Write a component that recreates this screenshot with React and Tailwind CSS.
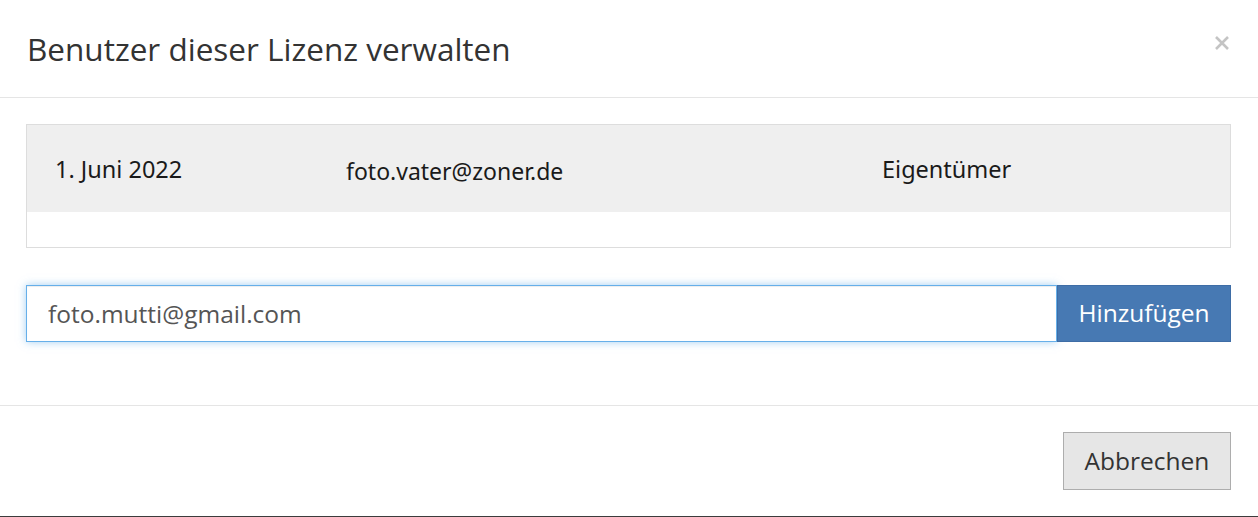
import React from "react";

const rows = [
  { date: "1. Juni 2022", email: "foto.vater@zoner.de", role: "Eigentümer" },
];

const App = () => {
  return (
    <div className="w-[1258px] h-[517px] bg-white border-b border-[#3c3c3c] flex flex-col font-['Open_Sans',sans-serif]">
      <div className="h-[98px] shrink-0 border-b border-[#e5e5e5] flex items-center justify-between pl-[27px] pr-[28px]">
        <h1 className="text-[31.5px] text-[#333] pt-[1px]">Benutzer dieser Lizenz verwalten</h1>
        <button className="text-[#c4c4c4] mb-[11px]">
          <svg width="16" height="16" viewBox="0 0 16 16">
            <path d="M2 2L14 14M14 2L2 14" stroke="currentColor" strokeWidth="2.6" />
          </svg>
        </button>
      </div>

      <div className="px-[26px] pr-[27px] pt-[26px]">
        <div className="border border-[#dddddd]">
          {rows.map((r) => (
            <div
              key={r.email}
              className="h-[87px] bg-[#efefef] grid grid-cols-[319px_536px_1fr] items-center text-[#1a1a1a] font-['Noto_Sans',sans-serif]"
            >
              <span className="pl-[28px] text-[23.5px] pt-[3px]">{r.date}</span>
              <span className="text-[23px] pt-[6px]">{r.email}</span>
              <span className="text-[23.5px] pt-[3px]">{r.role}</span>
            </div>
          ))}
          <div className="h-[35px]"></div>
        </div>

        <div className="flex mt-[37px]">
          <input
            className="flex-1 h-[57px] border border-[#66afe9] px-[21px] text-[24.5px] text-[#555] outline-none shadow-[inset_0_1px_1px_rgba(0,0,0,0.075),0_0_8px_rgba(102,175,233,0.6)]"
            defaultValue="foto.mutti@gmail.com"
          />
          <button className="w-[174px] h-[57px] bg-[#4779b3] border border-[#3e6da6] text-white text-[24.5px]">
            Hinzufügen
          </button>
        </div>
      </div>

      <div className="mt-[63px] border-t border-[#e5e5e5] flex justify-end pt-[26px] pr-[27px]">
        <button className="w-[168px] h-[58px] bg-[#e6e6e6] border border-[#adadad] text-[#333] text-[24.5px]">
          Abbrechen
        </button>
      </div>
    </div>
  );
};

export default App;
